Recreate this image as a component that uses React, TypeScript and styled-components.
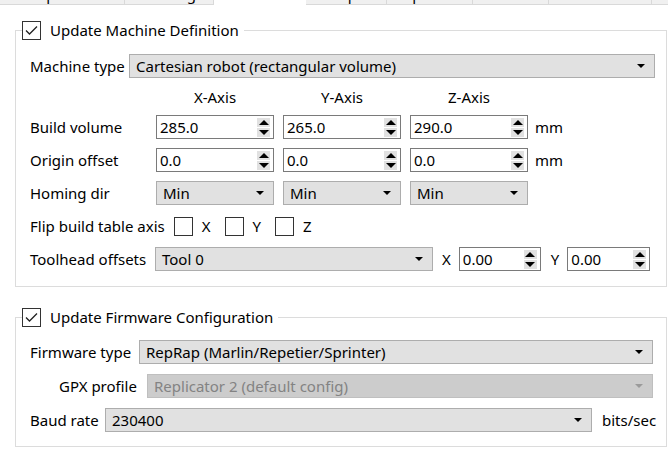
import React from "react";
import styled, { createGlobalStyle } from "styled-components";

const GlobalStyle = createGlobalStyle`
  html, body {
    margin: 0;
    padding: 0;
    background: #ffffff;
  }
  body {
    font-family: "Noto Sans", "Open Sans", sans-serif;
    font-size: 15px;
    color: #000000;
  }
`;

const Page = styled.div`
  width: 668px;
  height: 471px;
  overflow: hidden;
  background: #ffffff;
`;

const TabBar = styled.div`
  display: flex;
  height: 5px;
  overflow: hidden;
  align-items: flex-end;
`;

const Tab = styled.div<{ $w: number; $selected?: boolean }>`
  flex: 0 0 ${(p) => p.$w}px;
  height: 26px;
  box-sizing: border-box;
  display: flex;
  align-items: center;
  justify-content: center;
  padding-top: 4px;
  background: ${(p) => (p.$selected ? "#ffffff" : "#f0f0f0")};
  border: ${(p) => (p.$selected ? "none" : "1px solid #d9d9d9")};
  border-left: none;
  white-space: nowrap;
`;

const Group = styled.fieldset<{ $top: number; $padR: number; $padB: number }>`
  margin: ${(p) => p.$top}px 1px 0 15px;
  padding: 0 ${(p) => p.$padR}px ${(p) => p.$padB}px 14px;
  border: 1px solid #dcdcdc;
  min-width: 0;
`;

const Legend = styled.legend`
  margin-left: -8px;
  padding: 0 5px 0 0;
  display: flex;
  align-items: center;
  gap: 9px;
  height: 20px;
`;

const CheckBox = styled.span`
  width: 19px;
  height: 19px;
  box-sizing: border-box;
  border: 1px solid #333333;
  background: #ffffff;
  display: inline-flex;
  align-items: center;
  justify-content: center;
  flex: 0 0 auto;
`;

const Body = styled.div<{ $padTop: number; $gap: number }>`
  display: flex;
  flex-direction: column;
  gap: ${(p) => p.$gap}px;
  padding-top: ${(p) => p.$padTop}px;
`;

const Row = styled.div<{ $h?: number; $indent?: number }>`
  display: flex;
  align-items: center;
  height: ${(p) => p.$h ?? 24}px;
  padding-left: ${(p) => p.$indent ?? 0}px;
`;

const Label = styled.span<{ $w?: number }>`
  ${(p) => (p.$w ? `flex: 0 0 ${p.$w}px;` : "flex: 0 0 auto; margin-right: 9px;")}
  white-space: nowrap;
`;

const Head = styled.span`
  flex: 0 0 118px;
  margin-right: 9px;
  text-align: center;
`;

const Combo = styled.div<{ $w?: number; $disabled?: boolean; $mr?: number }>`
  ${(p) => (p.$w ? `flex: 0 0 ${p.$w}px;` : "flex: 1 1 auto;")}
  margin-right: ${(p) => p.$mr ?? 0}px;
  height: 24px;
  box-sizing: border-box;
  border: 1px solid ${(p) => (p.$disabled ? "#bfbfbf" : "#adadad")};
  background: ${(p) => (p.$disabled ? "#cccccc" : "#e1e1e1")};
  color: ${(p) => (p.$disabled ? "#838383" : "#000000")};
  display: flex;
  align-items: center;
  justify-content: space-between;
  padding: 0 9px 0 6px;
  white-space: nowrap;
`;

const Arrow = styled.span<{ $disabled?: boolean }>`
  width: 0;
  height: 0;
  border-left: 4px solid transparent;
  border-right: 4px solid transparent;
  border-top: 4px solid ${(p) => (p.$disabled ? "#9a9a9a" : "#000000")};
`;

const Spin = styled.div<{ $w: number; $mr?: number }>`
  flex: 0 0 ${(p) => p.$w}px;
  margin-right: ${(p) => p.$mr ?? 0}px;
  height: 24px;
  box-sizing: border-box;
  border: 1px solid #7a7a7a;
  background: #ffffff;
  display: flex;
  align-items: center;
  justify-content: space-between;
  padding: 0 3px 0 3px;
`;

const SpinButtons = styled.div`
  display: flex;
  flex-direction: column;
  gap: 1px;
`;

const SpinButton = styled.span<{ $up?: boolean }>`
  width: 13px;
  height: 9px;
  background: #e1e1e1;
  display: flex;
  align-items: center;
  justify-content: center;
  &::after {
    content: "";
    width: 0;
    height: 0;
    border-left: 5px solid transparent;
    border-right: 5px solid transparent;
    ${(p) =>
      p.$up ? "border-bottom: 5px solid #000000;" : "border-top: 5px solid #000000;"}
  }
`;

const Unit = styled.span<{ $ml: number; $mr?: number }>`
  margin-left: ${(p) => p.$ml}px;
  margin-right: ${(p) => p.$mr ?? 0}px;
  white-space: nowrap;
`;

const CheckItem = styled.span`
  display: inline-flex;
  align-items: center;
  gap: 9px;
  margin-right: 14px;
`;

const Tick = () => (
  <svg width="15" height="15" viewBox="0 0 15 15">
    <polyline points="2,7.5 5.5,11 13,3.5" fill="none" stroke="#222" strokeWidth="1.3" />
  </svg>
);

const ComboBox = ({ text, w, disabled, mr }: { text: string; w?: number; disabled?: boolean; mr?: number }) => (
  <Combo $w={w} $disabled={disabled} $mr={mr}>
    <span>{text}</span>
    <Arrow $disabled={disabled} />
  </Combo>
);

const SpinBox = ({ value, w, mr }: { value: string; w: number; mr?: number }) => (
  <Spin $w={w} $mr={mr}>
    <span>{value}</span>
    <SpinButtons>
      <SpinButton $up />
      <SpinButton />
    </SpinButtons>
  </Spin>
);

const tabs = [
  { label: "Temperature", w: 125 },
  { label: "Cooling", w: 89 },
  { label: "Machine", w: 92, selected: true },
  { label: "Scripts", w: 81 },
  { label: "Speeds", w: 86 },
  { label: "Other", w: 76 },
  { label: "Advanced", w: 103 },
  { label: "Printer", w: 80 },
];

export default function App() {
  return (
    <Page>
      <GlobalStyle />
      <TabBar>
        {tabs.map((t) => (
          <Tab key={t.label} $w={t.w} $selected={t.selected}>
            {t.label}
          </Tab>
        ))}
      </TabBar>

      <Group $top={15} $padR={11} $padB={15}>
        <Legend>
          <CheckBox>
            <Tick />
          </CheckBox>
          Update Machine Definition
        </Legend>
        <Body $padTop={14} $gap={9}>
          <Row>
            <Label $w={99}>Machine type</Label>
            <ComboBox text="Cartesian robot (rectangular volume)" />
          </Row>
          <Row $h={19}>
            <Label $w={126} />
            <Head>X-Axis</Head>
            <Head>Y-Axis</Head>
            <Head>Z-Axis</Head>
          </Row>
          <Row>
            <Label $w={126}>Build volume</Label>
            <SpinBox value="285.0" w={118} mr={9} />
            <SpinBox value="265.0" w={118} mr={9} />
            <SpinBox value="290.0" w={118} />
            <Unit $ml={7}>mm</Unit>
          </Row>
          <Row>
            <Label $w={126}>Origin offset</Label>
            <SpinBox value="0.0" w={118} mr={9} />
            <SpinBox value="0.0" w={118} mr={9} />
            <SpinBox value="0.0" w={118} />
            <Unit $ml={7}>mm</Unit>
          </Row>
          <Row>
            <Label $w={126}>Homing dir</Label>
            <ComboBox text="Min" w={118} mr={9} />
            <ComboBox text="Min" w={118} mr={9} />
            <ComboBox text="Min" w={118} />
          </Row>
          <Row>
            <Label>Flip build table axis</Label>
            {["X", "Y", "Z"].map((a) => (
              <CheckItem key={a}>
                <CheckBox />
                {a}
              </CheckItem>
            ))}
          </Row>
          <Row>
            <Label $w={125}>Toolhead offsets</Label>
            <ComboBox text="Tool 0" w={278} />
            <Unit $ml={9} $mr={8}>X</Unit>
            <SpinBox value="0.00" w={82} />
            <Unit $ml={10} $mr={8}>Y</Unit>
            <SpinBox value="0.00" w={83} />
          </Row>
        </Body>
      </Group>

      <Group $top={20} $padR={13} $padB={14}>
        <Legend>
          <CheckBox>
            <Tick />
          </CheckBox>
          Update Firmware Configuration
        </Legend>
        <Body $padTop={13} $gap={10}>
          <Row>
            <Label $w={109}>Firmware type</Label>
            <ComboBox text="RepRap (Marlin/Repetier/Sprinter)" />
          </Row>
          <Row $indent={29}>
            <Label $w={88}>GPX profile</Label>
            <ComboBox text="Replicator 2 (default config)" disabled />
          </Row>
          <Row>
            <Label $w={75}>Baud rate</Label>
            <ComboBox text="230400" w={487} />
            <Unit $ml={10}>bits/sec</Unit>
          </Row>
        </Body>
      </Group>
    </Page>
  );
}
